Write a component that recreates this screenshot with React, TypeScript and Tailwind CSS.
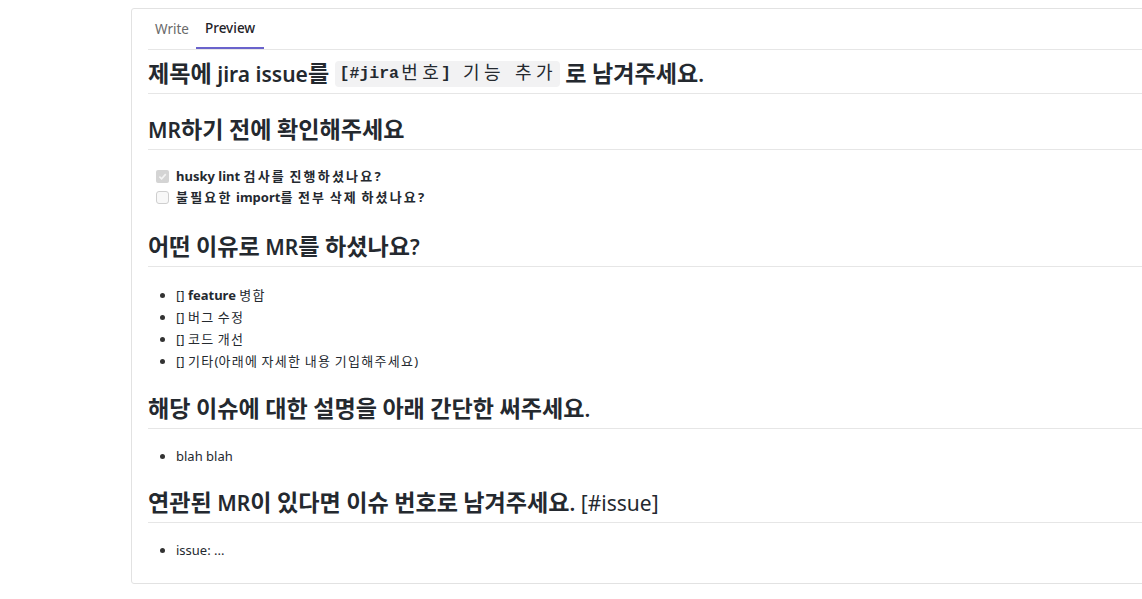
import React from "react";

const sans = '"Noto Sans", "Noto Sans CJK KR", sans-serif';
const mono = '"Liberation Mono", "Noto Sans CJK KR", monospace';

const HANGUL = /([\uAC00-\uD7A3\u3131-\u318E]+)/;

function KH({ t }: { t: string }) {
  return (
    <>
      {t.split(HANGUL).map((p, i) =>
        HANGUL.test(p) ? (
          <span key={i} className="text-[1.1em] leading-[20px]">
            {p}
          </span>
        ) : (
          <React.Fragment key={i}>{p}</React.Fragment>
        )
      )}
    </>
  );
}

function KB({ t, bold }: { t: string; bold?: boolean }) {
  return (
    <>
      {t.split(HANGUL).map((p, i) =>
        HANGUL.test(p) ? (
          <span key={i} className={bold ? "tracking-[2.2px]" : "tracking-[1.3px]"}>
            {p}
          </span>
        ) : (
          <React.Fragment key={i}>{p}</React.Fragment>
        )
      )}
    </>
  );
}

function CodeKo({ t }: { t: string }) {
  return (
    <>
      {t.split("").map((c, i) => (
        <span key={i} className="inline-block w-[21px] text-center font-normal text-[18px] leading-[26px]">
          {c}
        </span>
      ))}
    </>
  );
}

function H({ children, className = "" }: { children: React.ReactNode; className?: string }) {
  return (
    <div
      className={`text-[21px] font-semibold leading-[30px] h-[35px] pb-[4px] border-b border-[#e6e6e6] text-[#24292f] whitespace-nowrap ${className}`}
    >
      {children}
    </div>
  );
}

function Bullet({ children }: { children: React.ReactNode }) {
  return (
    <div className="flex items-center h-[22px] leading-[22px]">
      <div className="w-[28px] flex items-center">
        <span className="ml-[12px] w-[5px] h-[5px] rounded-full bg-[#333]" />
      </div>
      <span className="whitespace-nowrap">{children}</span>
    </div>
  );
}

function Check({ checked, children }: { checked?: boolean; children: React.ReactNode }) {
  return (
    <div className="flex items-center h-[21px] leading-[21px] font-bold">
      <div className="w-[28px] flex items-center">
        {checked ? (
          <span className="ml-[8px] w-[13px] h-[13px] rounded-[2px] bg-[#d4d4d4] flex items-center justify-center">
            <svg width="9" height="9" viewBox="0 0 10 10">
              <path d="M1.5 5.2 L4 7.6 L8.6 2.4" fill="none" stroke="#f4f4f4" strokeWidth="1.8" />
            </svg>
          </span>
        ) : (
          <span className="ml-[8px] w-[13px] h-[13px] rounded-[3px] border border-[#cfcfcf] bg-[#f8f8f8]" />
        )}
      </div>
      <span className="whitespace-nowrap">{children}</span>
    </div>
  );
}

export default function App() {
  return (
    <div className="w-full h-[599px] overflow-hidden bg-white" style={{ fontFamily: sans }}>
      <div className="ml-[131px] mt-[8px] w-[1100px] border border-[#e2e2e2] rounded-[3px] text-[13px] text-[#24292f]">
        <div className="mx-4 h-[41px] flex border-b border-[#e6e6e6]">
          <div className="h-full px-[7px] flex items-center text-[#6a6a6a] text-[13.5px]">Write</div>
          <div className="h-full px-[9px] flex items-center text-[#1f2328] font-medium text-[13.5px] border-b-2 border-[#6a63cc] mb-[-1px]">
            Preview
          </div>
        </div>
        <div className="px-4 pb-[22px]">
          <H className="mt-[9px] flex items-center">
            <span>
              <KH t="제목에 jira issue를" />
              &nbsp;
            </span>
            <span
              className="inline-flex items-center h-[26px] px-[5px] rounded-[4px] bg-[#f2f2f3] text-[16.5px] font-bold"
              style={{ fontFamily: mono }}
            >
              [#jira<CodeKo t="번호" />]&nbsp;<CodeKo t="기능" />&nbsp;<CodeKo t="추가" />
            </span>
            <span>
              &nbsp;
              <KH t="로 남겨주세요." />
            </span>
          </H>
          <H className="mt-[21px]">
            <KH t="MR하기 전에 확인해주세요" />
          </H>
          <div className="mt-[16px]">
            <Check checked>
              <KB bold t="husky lint 검사를 진행하셨나요?" />
            </Check>
            <Check>
              <KB bold t="불필요한 import를 전부 삭제 하셨나요?" />
            </Check>
          </div>
          <H className="mt-[24px]">
            <KH t="어떤 이유로 MR를 하셨나요?" />
          </H>
          <div className="mt-[17px]">
            <Bullet>
              [] <b>feature</b> <KB t="병합" />
            </Bullet>
            <Bullet>
              [] <KB t="버그 수정" />
            </Bullet>
            <Bullet>
              [] <KB t="코드 개선" />
            </Bullet>
            <Bullet>
              [] <KB t="기타(아래에 자세한 내용 기입해주세요)" />
            </Bullet>
          </div>
          <H className="mt-[22px]">
            <KH t="해당 이슈에 대한 설명을 아래 간단한 써주세요." />
          </H>
          <div className="mt-[16px]">
            <Bullet>blah blah</Bullet>
          </div>
          <H className="mt-[21px]">
            <KH t="연관된 MR이 있다면 이슈 번호로 남겨주세요." />{" "}
            <span className="font-normal">[#issue]</span>
          </H>
          <div className="mt-[16px]">
            <Bullet>issue: ...</Bullet>
          </div>
        </div>
      </div>
    </div>
  );
}
